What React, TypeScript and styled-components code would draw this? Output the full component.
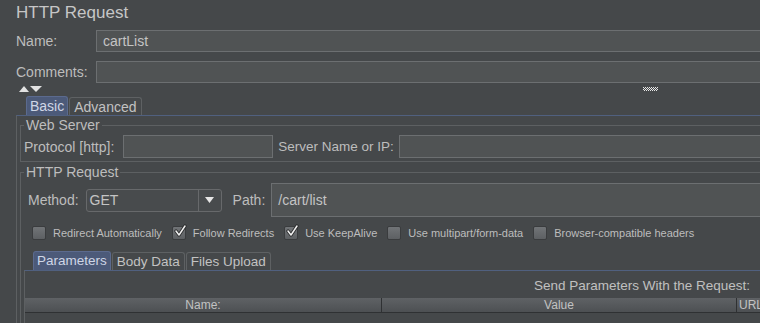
import styled, { createGlobalStyle } from "styled-components";

const GlobalStyle = createGlobalStyle`
  html, body {
    margin: 0;
    padding: 0;
    overflow: hidden;
    background: #45484a;
  }
  body {
    font-family: "Liberation Sans", Arial, sans-serif;
    color: #bbbbbb;
  }
`;

const Page = styled.div`
  width: 1252px;
  padding: 0 16px;
  display: flex;
  flex-direction: column;
`;

const Title = styled.h1`
  margin: 2px 0 6px;
  font-size: 17px;
  line-height: 22px;
  font-weight: normal;
  color: #c6c6c6;
`;

const FieldRow = styled.div<{ $gap?: number }>`
  display: flex;
  align-items: center;
  margin-bottom: ${(p) => p.$gap ?? 0}px;
`;

const Label = styled.span<{ $width?: number; $size?: number; $left?: number }>`
  flex: none;
  width: ${(p) => (p.$width ? `${p.$width}px` : "auto")};
  margin-left: ${(p) => p.$left ?? 0}px;
  font-size: ${(p) => p.$size ?? 14}px;
  white-space: nowrap;
  color: #bdbdbd;
`;

const TextBox = styled.div<{ $width?: number; $height?: number; $left?: number }>`
  box-sizing: border-box;
  flex: ${(p) => (p.$width ? "none" : "1")};
  width: ${(p) => (p.$width ? `${p.$width}px` : "auto")};
  height: ${(p) => p.$height ?? 22}px;
  margin-left: ${(p) => p.$left ?? 0}px;
  padding: 0 6px;
  display: flex;
  align-items: center;
  background: #505354;
  border: 1px solid #6c6f71;
  font-size: 14px;
  color: #c4c4c4;
`;

const Divider = styled.div`
  display: grid;
  grid-template-columns: 1fr auto 1fr;
  align-items: center;
  height: 12px;
  margin-bottom: 1px;
`;

const Arrows = styled.svg`
  margin-left: 3px;
  justify-self: start;
`;

const Grip = styled.svg`
  margin-left: 16px;
`;

const TabStrip = styled.div<{ $left: number }>`
  display: flex;
  align-items: flex-end;
  height: 19px;
  margin-left: ${(p) => p.$left}px;
`;

const Tab = styled.div<{ $active?: boolean; $size?: number; $pad?: number }>`
  box-sizing: border-box;
  height: ${(p) => (p.$active ? 19 : 18)}px;
  margin-right: 1px;
  padding: 1px ${(p) => p.$pad ?? 3}px 0;
  border: 1px solid ${(p) => (p.$active ? "#5b6a8e" : "#5e6163")};
  border-bottom: none;
  border-radius: 3px 3px 0 0;
  background: ${(p) => (p.$active ? "#4c5a79" : "#45484a")};
  color: ${(p) => (p.$active ? "#cfd6e6" : "#c2c2c2")};
  font-size: ${(p) => p.$size ?? 14}px;
  line-height: 16px;
  white-space: nowrap;
`;

const TabPanel = styled.div<{ $pad?: number }>`
  display: flex;
  flex-direction: column;
  border: 1px solid #5d6062;
  border-top-color: #50607f;
  padding: 1px ${(p) => p.$pad ?? 0}px 0;
  min-height: 260px;
`;

const Group = styled.fieldset<{ $top?: number; $bottom?: number }>`
  margin: ${(p) => p.$top ?? 0}px 0 0;
  padding: 2px 3px ${(p) => p.$bottom ?? 3}px;
  border: 1px solid #5d6062;
  min-width: 0;
  display: flex;
  flex-direction: column;
`;

const Legend = styled.legend`
  padding: 0 2px;
  font-size: 14px;
  line-height: 16px;
  color: #bdbdbd;
`;

const MethodRow = styled.div`
  display: flex;
  align-items: center;
  height: 34px;
  margin-top: 1px;
  padding-left: 4px;
`;

const Combo = styled.div`
  box-sizing: border-box;
  width: 136px;
  height: 23px;
  margin-left: 7px;
  display: flex;
  border: 1px solid #67696b;
  border-radius: 3px;
  background: #484b4d;
  font-size: 14px;
  color: #c4c4c4;
`;

const ComboValue = styled.span`
  flex: 1;
  padding-left: 3px;
  line-height: 21px;
`;

const ComboButton = styled.span`
  width: 22px;
  border-left: 1px solid #67696b;
  display: flex;
  align-items: center;
  justify-content: center;
`;

const CheckRow = styled.div`
  display: flex;
  align-items: center;
  gap: 10px;
  height: 17px;
  margin-top: 7px;
  padding-left: 8px;
`;

const CheckItem = styled.label`
  display: flex;
  align-items: center;
  gap: 7px;
  font-size: 11px;
  color: #bdbdbd;
  white-space: nowrap;
`;

const Box = styled.span`
  position: relative;
  box-sizing: border-box;
  width: 14px;
  height: 14px;
  border: 1px solid #3a3c3e;
  border-radius: 2px;
  background: linear-gradient(#717477, #5d6063);
  display: flex;
  align-items: center;
  justify-content: center;
`;

const Tick = styled.svg`
  position: absolute;
  left: 1px;
  top: -3px;
`;

const InnerTabs = styled.div`
  margin-top: 10px;
  display: flex;
  flex-direction: column;
`;

const Caption = styled.div`
  margin-top: 5px;
  text-align: center;
  font-size: 13.5px;
  line-height: 18px;
  color: #c0c0c0;
`;

const TableHead = styled.div`
  margin-top: 3px;
  display: flex;
  height: 14px;
  border-bottom: 1px solid #2f3133;
  background: linear-gradient(#5f6265, #4d5053);
`;

const HeadCell = styled.div<{ $width?: number; $align?: string }>`
  flex: ${(p) => (p.$width ? "none" : "1")};
  width: ${(p) => (p.$width ? `${p.$width}px` : "auto")};
  border-right: 1px solid #2f3133;
  text-align: ${(p) => p.$align ?? "center"};
  padding-left: ${(p) => (p.$align === "left" ? 2 : 0)}px;
  font-size: 12px;
  line-height: 14px;
  color: #c2c2c2;
`;

const checks = [
  { label: "Redirect Automatically", on: false },
  { label: "Follow Redirects", on: true },
  { label: "Use KeepAlive", on: true },
  { label: "Use multipart/form-data", on: false },
  { label: "Browser-compatible headers", on: false },
];

const CheckBox = ({ label, on }: { label: string; on: boolean }) => (
  <CheckItem>
    <Box>
      {on && (
        <Tick width="14" height="14" viewBox="0 0 14 14">
          <polyline points="2,7 5,11 11,2" fill="none" stroke="#2a2b2c" strokeWidth="3.2" strokeLinecap="round" strokeLinejoin="round" />
          <polyline points="2,7 5,11 11,2" fill="none" stroke="#f0f0f0" strokeWidth="1.5" strokeLinecap="round" strokeLinejoin="round" />
        </Tick>
      )}
    </Box>
    {label}
  </CheckItem>
);

const gripDots = Array.from({ length: 15 * 4 }, (_, i) => ({ x: i % 15, y: Math.floor(i / 15) })).filter(
  (d) => (d.x + d.y) % 2 === 0
);

export default function App() {
  return (
    <Page>
      <GlobalStyle />
      <Title>HTTP Request</Title>
      <FieldRow $gap={9}>
        <Label $width={80}>Name:</Label>
        <TextBox>cartList</TextBox>
      </FieldRow>
      <FieldRow>
        <Label $width={80}>Comments:</Label>
        <TextBox />
      </FieldRow>
      <Divider>
        <Arrows width="23" height="6" viewBox="0 0 23 6">
          <polygon points="0,6 5,0 10,6" fill="#e2e2e2" />
          <polygon points="11,0 23,0 17,6" fill="#e2e2e2" />
        </Arrows>
        <Grip width="15" height="4" viewBox="0 0 15 4">
          {gripDots.map((d) => (
            <rect key={`${d.x}-${d.y}`} x={d.x} y={d.y} width="1" height="1" fill="#e6e6e6" />
          ))}
        </Grip>
        <span />
      </Divider>
      <TabStrip $left={10}>
        <Tab $active>Basic</Tab>
        <Tab $pad={4}>Advanced</Tab>
      </TabStrip>
      <TabPanel $pad={3}>
        <Group>
          <Legend>Web Server</Legend>
          <FieldRow>
            <Label>Protocol [http]:</Label>
            <TextBox $width={150} $height={23} $left={9} />
            <Label $left={5} $size={13.5}>Server Name or IP:</Label>
            <TextBox $height={23} $left={5} />
          </FieldRow>
        </Group>
        <Group $top={2} $bottom={0}>
          <Legend>HTTP Request</Legend>
          <MethodRow>
            <Label>Method:</Label>
            <Combo>
              <ComboValue>GET</ComboValue>
              <ComboButton>
                <svg width="9" height="6" viewBox="0 0 9 6">
                  <polygon points="0,0 9,0 4.5,6" fill="#e6e6e6" />
                </svg>
              </ComboButton>
            </Combo>
            <Label $left={11}>Path:</Label>
            <TextBox $height={34} $left={6}>/cart/list</TextBox>
          </MethodRow>
          <CheckRow>
            {checks.map((c) => (
              <CheckBox key={c.label} label={c.label} on={c.on} />
            ))}
          </CheckRow>
          <InnerTabs>
            <TabStrip $left={9}>
              <Tab $active $size={13.5}>Parameters</Tab>
              <Tab $size={13.5} $pad={4}>Body Data</Tab>
              <Tab $size={13.5} $pad={4}>Files Upload</Tab>
            </TabStrip>
            <TabPanel>
              <Caption>Send Parameters With the Request:</Caption>
              <TableHead>
                <HeadCell $width={356}>Name:</HeadCell>
                <HeadCell $width={354}>Value</HeadCell>
                <HeadCell $align="left">URL</HeadCell>
              </TableHead>
            </TabPanel>
          </InnerTabs>
        </Group>
      </TabPanel>
    </Page>
  );
}
